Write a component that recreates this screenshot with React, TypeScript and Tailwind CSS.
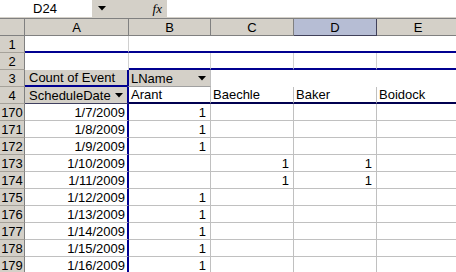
import React from 'react';

// column widths: row header, A, B, C, D, E
const W = ['w-[25px]', 'w-[104px]', 'w-[82px]', 'w-[83px]', 'w-[83px]', 'w-[83px]'];

const dates = [
  ['170', '1/7/2009', '1', '', ''],
  ['171', '1/8/2009', '1', '', ''],
  ['172', '1/9/2009', '1', '', ''],
  ['173', '1/10/2009', '', '1', '1'],
  ['174', '1/11/2009', '', '1', '1'],
  ['175', '1/12/2009', '1', '', ''],
  ['176', '1/13/2009', '1', '', ''],
  ['177', '1/14/2009', '1', '', ''],
  ['178', '1/15/2009', '1', '', ''],
  ['179', '1/16/2009', '1', '', ''],
];

const Arrow = () => (
  <svg width="8" height="5" viewBox="0 0 8 5" className="shrink-0">
    <path d="M0 0h8L4 4.5z" fill="#000" />
  </svg>
);

const DropButton = () => (
  <div className="w-[15px] h-[14px] flex items-center justify-center bg-[#d4d0c8] mr-[1px]">
    <Arrow />
  </div>
);

const RowHead = ({ n }: { n: string }) => (
  <div className={`${W[0]} shrink-0 h-full flex items-center justify-center bg-[#d4d0c8] border-r border-b border-r-[#808080] border-b-[#a6a29a]`}>
    {n}
  </div>
);

const Row = ({ children }: { children: React.ReactNode }) => (
  <div className="flex h-[17px] leading-none">{children}</div>
);

export default function App() {
  return (
    <div
      className="w-[456px] h-[272px] overflow-hidden bg-white text-[13px] text-black"
      style={{ fontFamily: '"Liberation Sans", Arial, sans-serif' }}
    >
      {/* formula bar */}
      <div className="flex h-[17px] bg-[#d4d0c8]">
        <div className="w-[92px] bg-white flex items-center justify-center pr-[2px]">D24</div>
        <div className="w-[20px] flex items-center justify-center">
          <Arrow />
        </div>
        <div className="w-[55px] flex items-center justify-end pr-[5px] italic font-serif text-[13px]">
          <span style={{ fontFamily: '"Liberation Serif", serif' }}>fx</span>
        </div>
        <div className="flex-1 bg-white" />
      </div>
      <div className="h-[1px] bg-[#d4d0c8]" />
      <div className="h-[1px] bg-[#808080]" />

      {/* column headers */}
      <div className="flex h-[17px] leading-none">
        <div className={`${W[0]} shrink-0 bg-[#d4d0c8] border-r border-b border-[#808080]`} />
        {['A', 'B', 'C', 'D', 'E'].map((c, i) => (
          <div
            key={c}
            className={
              c === 'D'
                ? `${W[i + 1]} shrink-0 flex items-center justify-center bg-[#b6bdd4] border-r border-b border-[#41415a]`
                : `${W[i + 1]} shrink-0 flex items-center justify-center bg-[#d4d0c8] border-r border-b border-[#808080]`
            }
          >
            {c}
          </div>
        ))}
      </div>

      {/* row 1 */}
      <Row>
        <RowHead n="1" />
        <div className={`${W[1]} shrink-0 border-r border-r-[#d0d0d0] border-b-2 border-b-[#000090]`} />
        <div className={`${W[2]} shrink-0 border-b-2 border-b-[#000090]`} />
        <div className={`${W[3]} shrink-0 border-b-2 border-b-[#000090]`} />
        <div className={`${W[4]} shrink-0 border-b-2 border-b-[#000090]`} />
        <div className={`${W[5]} shrink-0 border-b-2 border-b-[#000090]`} />
      </Row>

      {/* row 2 */}
      <Row>
        <RowHead n="2" />
        <div className={`${W[1]} shrink-0 border-r border-[#d0d0d0]`} />
        <div className={`${W[2]} shrink-0 border-r border-r-[#d0d0d0] border-b-2 border-b-[#000090]`} />
        <div className={`${W[3]} shrink-0 border-r border-r-[#d0d0d0] border-b-2 border-b-[#000090]`} />
        <div className={`${W[4]} shrink-0 border-r border-r-[#d0d0d0] border-b-2 border-b-[#000090]`} />
        <div className={`${W[5]} shrink-0 border-b-2 border-b-[#000090]`} />
      </Row>

      {/* row 3 */}
      <Row>
        <RowHead n="3" />
        <div className={`${W[1]} shrink-0 flex items-center pl-[4px] bg-[#d4d0c8] border-b-2 border-b-[#000090]`}>
          Count of Event
        </div>
        <div className={`${W[2]} shrink-0 flex items-center justify-between pl-[2px] bg-[#d4d0c8] border-l-2 border-l-[#000090] border-r border-r-[#c0c0c0] border-b border-b-[#a0a0a0] -ml-[2px] w-[84px]`}>
          <span>LName</span>
          <DropButton />
        </div>
        <div className={`${W[3]} shrink-0`} />
        <div className={`${W[4]} shrink-0`} />
        <div className={`${W[5]} shrink-0`} />
      </Row>

      {/* row 4 */}
      <Row>
        <RowHead n="4" />
        <div className={`${W[1]} shrink-0 flex items-center justify-between pl-[4px] bg-[#d4d0c8] border-r-2 border-r-[#000090] border-b border-b-[#404060]`}>
          <span>ScheduleDate</span>
          <DropButton />
        </div>
        {['Arant', 'Baechle', 'Baker', 'Boidock'].map((n, i) => (
          <div
            key={n}
            className={`${W[i + 2]} shrink-0 flex items-center pl-[2px] border-r border-r-[#c0c0c0] border-b-2 border-b-[#000050]`}
          >
            {n}
          </div>
        ))}
      </Row>

      {/* data rows */}
      {dates.map(([n, d, b, c, e]) => (
        <Row key={n}>
          <RowHead n={n} />
          <div className={`${W[1]} shrink-0 flex items-center justify-end pr-[2px] border-r-2 border-r-[#000090] border-b border-b-[#c0c0c0]`}>
            {d}
          </div>
          <div className={`${W[2]} shrink-0 flex items-center justify-end pr-[4px] border-r border-b border-[#c0c0c0]`}>
            {b}
          </div>
          <div className={`${W[3]} shrink-0 flex items-center justify-end pr-[4px] border-r border-b border-[#c0c0c0]`}>
            {c}
          </div>
          <div className={`${W[4]} shrink-0 flex items-center justify-end pr-[4px] border-r border-b border-[#c0c0c0]`}>
            {e}
          </div>
          <div className={`${W[5]} shrink-0 border-r border-b border-[#c0c0c0]`} />
        </Row>
      ))}
    </div>
  );
}
